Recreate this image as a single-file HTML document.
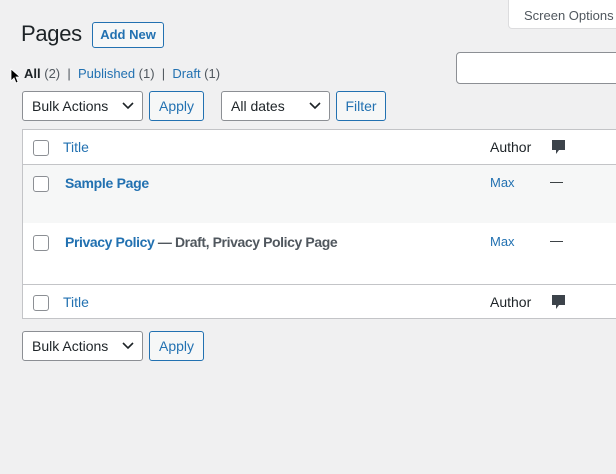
<!DOCTYPE html><html><head><style>
body{margin:0;width:616px;height:474px;background:#f0f0f1;font-family:"Liberation Sans",sans-serif;font-size:13px;color:#1d2327;position:relative;overflow:hidden}
.a{position:absolute}
.btn{position:absolute;border:1px solid #2271b1;border-radius:3px;background:#f6f7f7;color:#2271b1;font-size:13px;box-sizing:border-box;text-align:center}
.sel{position:absolute;border:1px solid #8c8f94;border-radius:3px;background:#fff;box-sizing:border-box;font-size:14px;padding-left:9px}
.sel svg{position:absolute;right:8px;top:10px}
.cb{position:absolute;width:14px;height:14px;border:1px solid #8c8f94;border-radius:3px;background:#fff}
.link{color:#2271b1}
.row{position:absolute;left:22px;width:620px;border-top:1px solid #c3c4c7}
</style></head><body>
<div class="a" style="left:508px;top:0;width:120px;height:29px;background:#fff;border:1px solid #dcdcde;border-top:none;border-radius:0 0 4px 4px;box-sizing:border-box;font-size:13px;color:#50575e;padding:8px 0 0 15px">Screen Options</div>
<div class="a" style="left:21px;top:21px;font-size:22px;letter-spacing:-0.3px">Pages</div>
<div class="btn" style="left:92px;top:22px;width:72px;height:26px;line-height:24px;font-weight:bold;background:#f6f7f7">Add New</div>
<div class="a" style="left:24px;top:66px;color:#50575e"><b style="color:#1d2327">All</b> (2) &nbsp;| &nbsp;<span class="link">Published</span> (1) &nbsp;| &nbsp;<span class="link">Draft</span> (1)</div>
<div class="a" style="left:456px;top:52px;width:170px;height:30px;border:1px solid #8c8f94;border-radius:4px;background:#fff"></div>
<div class="sel" style="left:22px;top:91px;width:121px;height:30px;line-height:28px">Bulk Actions<svg width="12" height="8"><path d="M1 1l5 5 5-5" stroke="#1d2327" stroke-width="1.6" fill="none"/></svg></div>
<div class="btn" style="left:149px;top:91px;width:55px;height:30px;line-height:28px;font-size:14px">Apply</div>
<div class="sel" style="left:221px;top:91px;width:109px;height:30px;line-height:28px">All dates<svg width="12" height="8"><path d="M1 1l5 5 5-5" stroke="#1d2327" stroke-width="1.6" fill="none"/></svg></div>
<div class="btn" style="left:336px;top:91px;width:50px;height:30px;line-height:28px;font-size:14px">Filter</div>
<div class="a" style="left:22px;top:129px;width:620px;height:190px;background:#fff;border:1px solid #c3c4c7;box-sizing:border-box"></div>
<div class="a" style="left:23px;top:165px;width:600px;height:58px;background:#f6f7f7"></div>
<div class="row" style="top:164px"></div><div class="row" style="top:284px"></div>
<div class="cb" style="left:33px;top:140px"></div><div class="a link" style="left:63px;top:139px;font-size:14px">Title</div>
<div class="a" style="left:490px;top:139px;font-size:14px">Author</div>
<svg class="a" style="left:551px;top:139px" width="15" height="16"><path d="M1 1h13v10H8l-3 4v-4H1z" fill="#3c434a"/></svg>
<div class="cb" style="left:33px;top:176px"></div><div class="a link" style="left:65px;top:175px;font-size:14px;font-weight:bold;letter-spacing:-0.3px">Sample Page</div>
<div class="a link" style="left:490px;top:175px">Max</div><div class="a" style="left:550px;top:174px">—</div>
<div class="cb" style="left:33px;top:235px"></div><div class="a" style="left:65px;top:234px;font-size:14px;font-weight:bold;color:#50575e;letter-spacing:-0.4px"><span class="link">Privacy Policy</span> — Draft, Privacy Policy Page</div>
<div class="a link" style="left:490px;top:234px">Max</div><div class="a" style="left:550px;top:233px">—</div>
<div class="cb" style="left:33px;top:295px"></div><div class="a link" style="left:63px;top:294px;font-size:14px">Title</div>
<div class="a" style="left:490px;top:294px;font-size:14px">Author</div>
<svg class="a" style="left:551px;top:294px" width="15" height="16"><path d="M1 1h13v10H8l-3 4v-4H1z" fill="#3c434a"/></svg>
<div class="sel" style="left:22px;top:331px;width:121px;height:30px;line-height:28px">Bulk Actions<svg width="12" height="8"><path d="M1 1l5 5 5-5" stroke="#1d2327" stroke-width="1.6" fill="none"/></svg></div>
<div class="btn" style="left:149px;top:331px;width:55px;height:30px;line-height:28px;font-size:14px">Apply</div>
<svg class="a" style="left:10px;top:68px" width="10" height="16"><path d="M1 1v12l3-3 2 5 2-1-2-5h4z" fill="#000" stroke="#fff" stroke-width=".8"/></svg>
</body></html>
